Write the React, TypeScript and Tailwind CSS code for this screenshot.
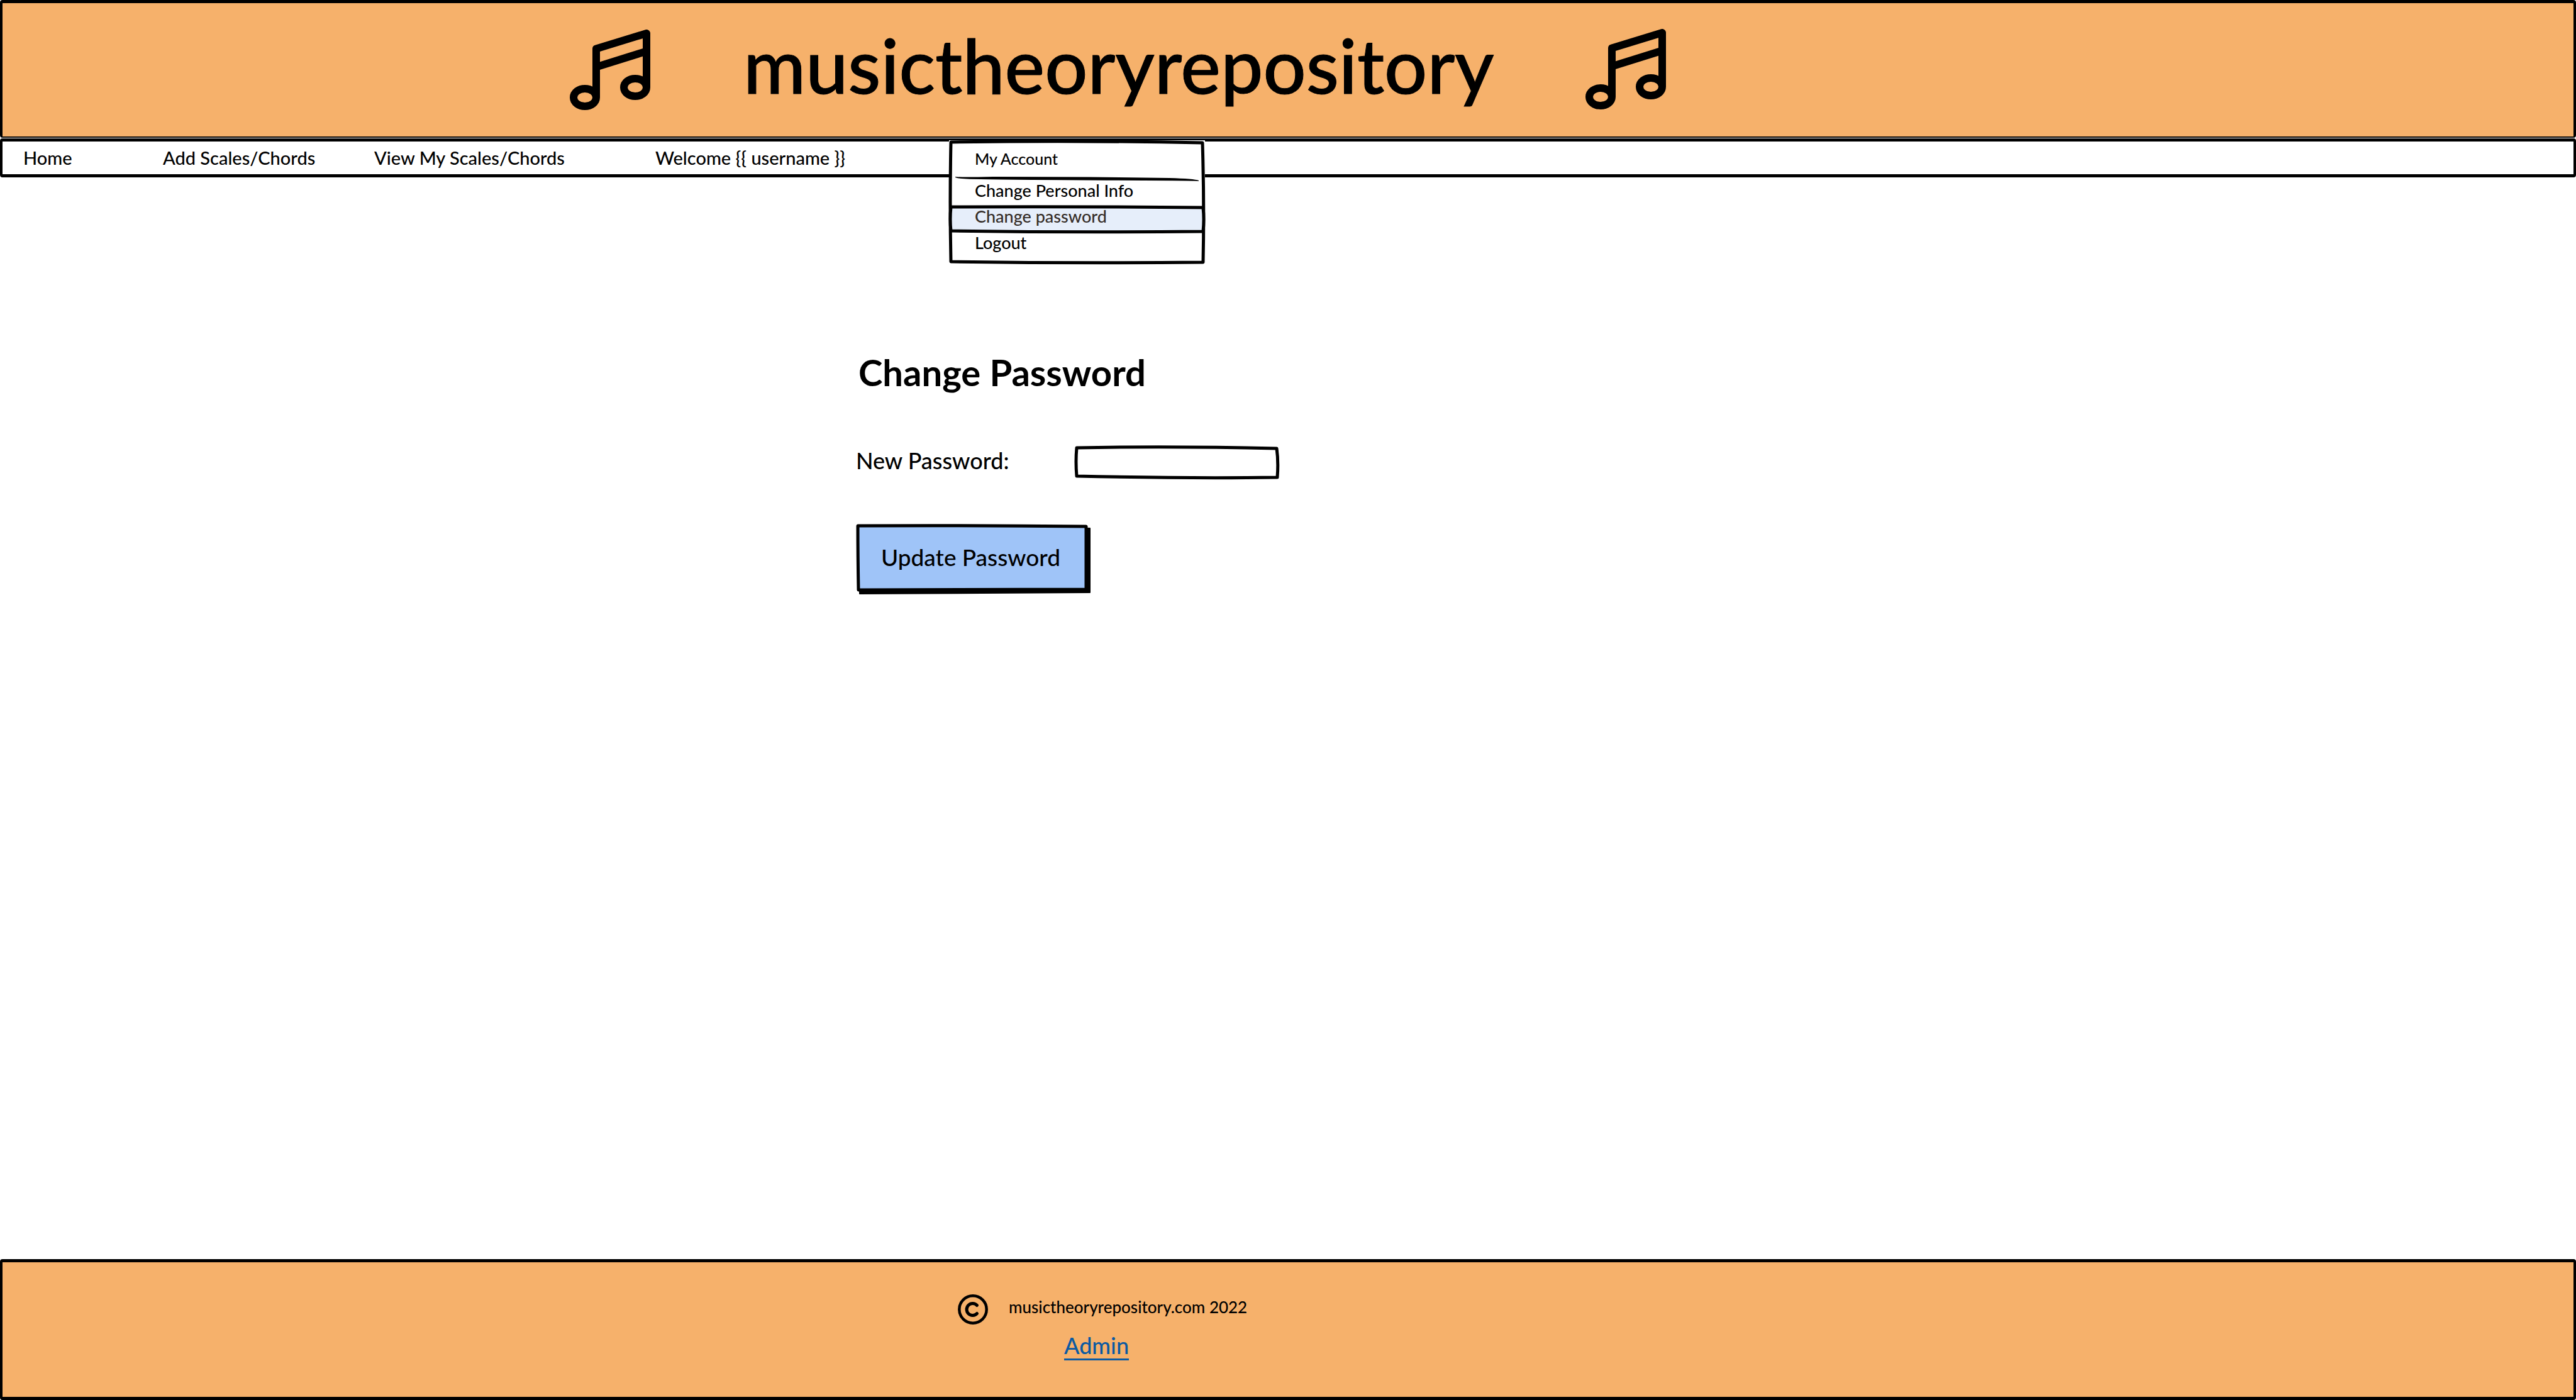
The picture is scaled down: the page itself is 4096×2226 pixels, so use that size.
import type { ReactNode } from "react";

function Frame({ w, h, d, fill, stroke = 5 }: { w: number; h: number; d: string; fill: string; stroke?: number }) {
  return (
    <svg
      aria-hidden="true"
      className="pointer-events-none absolute inset-0 h-full w-full overflow-visible"
      viewBox={`0 0 ${w} ${h}`}
      preserveAspectRatio="none"
    >
      <path d={d} fill={fill} stroke="#000" strokeWidth={stroke} strokeLinejoin="round" vectorEffect="non-scaling-stroke" />
    </svg>
  );
}

function MusicIcon({ className = "" }: { className?: string }) {
  return (
    <svg aria-hidden="true" viewBox="0 0 128 128" className={`h-32 w-32 shrink-0 ${className}`} fill="none" stroke="#000" strokeWidth="12" strokeLinejoin="round">
      <path d="M42 108V30.500L122 6V92" />
      <path d="M42 59.500L122 34.500" />
      <ellipse cx="24" cy="108" rx="18" ry="14" />
      <ellipse cx="104" cy="92" rx="18" ry="14" />
    </svg>
  );
}

function NavLink({ className, children }: { className: string; children: ReactNode }) {
  return (
    <a href="#" className={`shrink-0 whitespace-nowrap ${className}`}>
      {children}
    </a>
  );
}

function AccountMenu() {
  return (
    <div className="absolute left-0 top-0 h-[197px] w-[407px] bg-white text-[27px] leading-[30px]">
      <Frame w={407} h={197} fill="#fff" d="M3 3Q200 0 403 4Q406 100 404 194Q200 196 3 193Q1 100 3 3Z" />
      <div className="relative flex flex-col">
        <button type="button" className="flex h-[58px] items-start pl-[41px] pt-[14px] text-left text-[25px] leading-[30px]">
          My Account
        </button>
        <svg aria-hidden="true" className="ml-[10px] h-[7px] w-[387px]" viewBox="0 0 387 7" preserveAspectRatio="none">
          <path d="M0 0Q8 1 60 0Q220 0 340 2Q380 3 387 6V7Q370 6 300 6Q100 5 40 4Q6 4 0 1Z" />
        </svg>
        <a href="#" className="h-[41px] pl-[41px]">
          Change Personal Info
        </a>
        <a href="#" className="relative h-[40px] pl-[41px] text-[#352d28]">
          <Frame w={407} h={40} fill="#e6eefa" d="M3 0Q200 -1 404 1Q406 20 404 39Q200 41 3 38Q1 20 3 0Z" />
          <span className="relative block">Change password</span>
        </a>
        <a href="#" className="h-[45px] pl-[41px] pt-[2px]">
          Logout
        </a>
      </div>
    </div>
  );
}

export default function App() {
  return (
    <div className="flex min-h-screen flex-col bg-white font-['Lato',sans-serif] font-medium text-black">
      <header className="flex h-[219px] items-center rounded-[4px] border-4 border-b-2 border-t-[5px] border-black bg-[#f6b16b] pl-[902px]">
        <MusicIcon />
        <h1 className="ml-[148px] whitespace-nowrap pb-4 text-[120px] leading-[140px] [-webkit-text-stroke:1px_#000]">musictheoryrepository</h1>
        <MusicIcon className="mb-[2px] ml-[145px]" />
      </header>

      <nav className="relative mt-px flex h-[62px] items-center rounded-[4px] border-4 border-y-[5px] border-black pl-[33px] text-[29px] leading-[32px]">
        <NavLink className="w-[222px]">Home</NavLink>
        <NavLink className="w-[336px]">Add Scales/Chords</NavLink>
        <NavLink className="w-[447px]">View My Scales/Chords</NavLink>
        <span className="w-[467px] shrink-0 whitespace-nowrap">Welcome {"{{ username }}"}</span>
        <div className="relative -mt-[2px] h-[54px] w-[407px] shrink-0">
          <AccountMenu />
        </div>
      </nav>

      <main className="flex-1 pl-[1361px] pt-[276px]">
        <h2 className="pl-1 text-[58px] font-bold leading-[68px] text-black">Change Password</h2>
        <form className="flex flex-col items-start" onSubmit={(e) => e.preventDefault()}>
          <div className="mt-[82px] flex items-center">
            <label htmlFor="new-password" className="w-[348px] pb-1 text-[36px] leading-[42px]">
              New Password:
            </label>
            <div className="relative h-[52px] w-[325px]">
              <Frame w={325} h={52} fill="#fff" d="M3 4Q150 1 321 5Q324 26 322 51Q180 53 3 49Q1 26 3 4Z" />
              <input id="new-password" type="password" className="relative h-full w-full bg-transparent px-4 text-[27px] outline-none" />
            </div>
          </div>
          <button type="submit" className="relative mt-[73px] h-[110px] w-[373px] pb-[4px] pr-[8px] text-[37px] leading-[42px]">
            <Frame w={373} h={110} fill="#000" stroke={2} d="M6 7L372 7V109L200 110L6 111Z" />
            <Frame w={373} h={110} fill="#9fc4f8" d="M3 3Q180 2 366 4V104Q180 105 4 105Q3 50 3 3Z" />
            <span className="relative">Update Password</span>
          </button>
        </form>
      </main>

      <footer className="flex h-[224px] flex-col rounded-[4px] border-4 border-y-[5px] border-black bg-[#f6b16b] pl-[1519px] pt-[51px]">
        <div className="flex items-center">
          <svg aria-hidden="true" viewBox="0 0 48 48" className="h-12 w-12" fill="none" stroke="#000">
            <circle cx="24" cy="24" r="21.700" strokeWidth="4.500" />
            <path d="M30.500 17.500A9.500 9.500 0 1 0 30.500 30.500" strokeWidth="5" strokeLinecap="round" />
          </svg>
          <p className="ml-[33px] pb-2 text-[26px] leading-[30px]">musictheoryrepository.com 2022</p>
        </div>
        <a href="#" className="ml-[169px] mt-[12px] self-start border-b-[3px] border-[#0b5aa2] text-[36px] leading-[42px] text-[#0b5aa2]">
          Admin
        </a>
      </footer>
    </div>
  );
}
